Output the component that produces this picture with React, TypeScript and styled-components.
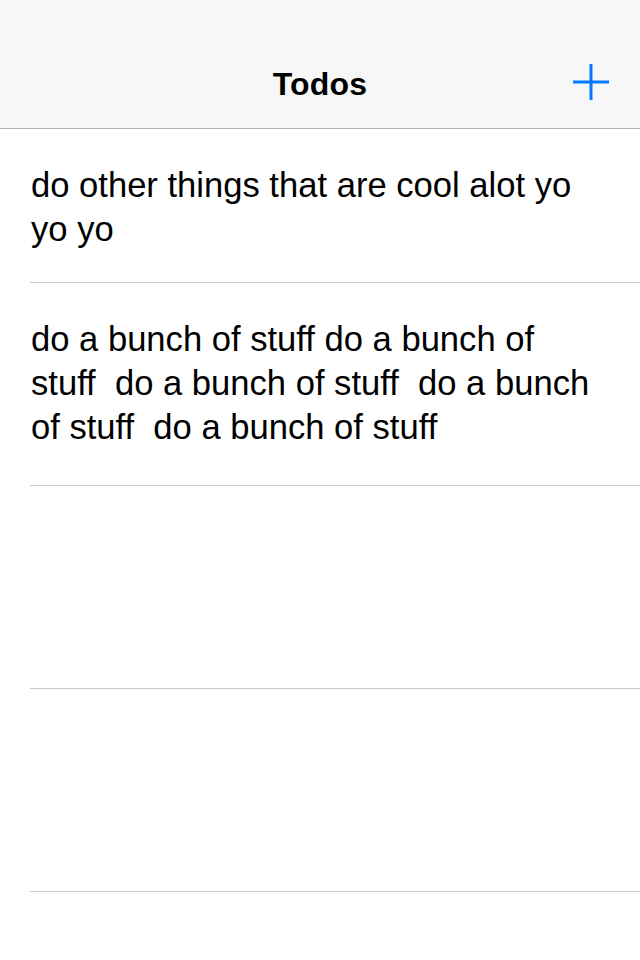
import styled, { createGlobalStyle } from "styled-components";

const GlobalStyle = createGlobalStyle`
  html, body {
    margin: 0;
    padding: 0;
    background: #ffffff;
  }
  body {
    font-family: "Liberation Sans", Arial, sans-serif;
    color: #000000;
  }
`;

const Screen = styled.div`
  width: 640px;
  min-height: 960px;
  background: #ffffff;
`;

const Header = styled.header`
  background: #f7f7f7;
  border-bottom: 1px solid #b2b2b2;
  padding-top: 40px;
`;

const NavBar = styled.div`
  height: 88px;
  display: grid;
  grid-template-columns: 1fr auto 1fr;
  align-items: center;
`;

const Title = styled.h1`
  grid-column: 2;
  margin: 0;
  font-size: 32px;
  line-height: 40px;
  font-weight: 700;
  letter-spacing: 0.2px;
`;

const AddButton = styled.button`
  grid-column: 3;
  justify-self: end;
  margin: 0 31px 5px 0;
  padding: 0;
  border: none;
  background: none;
  width: 36px;
  height: 36px;
  display: flex;
  align-items: center;
  justify-content: center;
  cursor: pointer;
`;

const List = styled.ul`
  list-style: none;
  margin: 0;
  padding: 0;
`;

const Row = styled.li<{ $minHeight?: number }>`
  box-sizing: border-box;
  margin-left: 30px;
  padding: 34px 37px 31px 1px;
  border-bottom: 1px solid #c8c7cc;
  min-height: ${(p) => (p.$minHeight ? `${p.$minHeight}px` : "0")};
  font-size: 34.6px;
  line-height: 44px;
  white-space: pre-wrap;
`;

const PlusIcon = () => (
  <svg width="36" height="36" viewBox="0 0 36 36" aria-hidden="true">
    <rect x="16.5" y="0" width="3" height="36" fill="#007aff" />
    <rect x="0" y="16.5" width="36" height="3" fill="#007aff" />
  </svg>
);

const todos = [
  { id: 1, text: "do other things that are cool alot yo yo yo" },
  {
    id: 2,
    text: "do a bunch of stuff do a bunch of stuff  do a bunch of stuff  do a bunch of stuff  do a bunch of stuff",
    minHeight: 203,
  },
  { id: 3, text: "", minHeight: 203 },
  { id: 4, text: "", minHeight: 203 },
];

function App() {
  return (
    <Screen>
      <GlobalStyle />
      <Header>
        <NavBar>
          <Title>Todos</Title>
          <AddButton aria-label="Add todo">
            <PlusIcon />
          </AddButton>
        </NavBar>
      </Header>
      <List>
        {todos.map((todo) => (
          <Row key={todo.id} $minHeight={todo.minHeight}>
            {todo.text}
          </Row>
        ))}
      </List>
    </Screen>
  );
}

export default App;
